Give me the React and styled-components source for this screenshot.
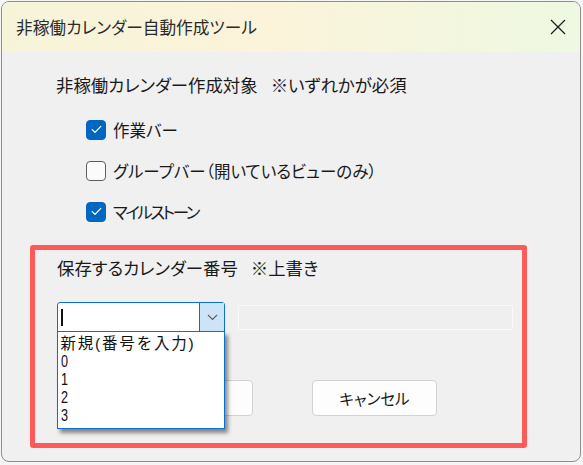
import React from 'react';
import styled, { createGlobalStyle } from 'styled-components';

const Global = createGlobalStyle`
  html, body { margin: 0; padding: 0; background: #f5f5f5; }
  body { font-family: "Noto Sans CJK JP", "Noto Sans", sans-serif; color: #1a1a1a; }
  * { box-sizing: border-box; }
`;

const Window = styled.div`
  margin: 1px 0 0 1px;
  width: 580px;
  height: 461px;
  border: 1px solid #8e8e8e;
  border-radius: 8px;
  background: #f0f0f0;
  overflow: hidden;
  display: flex;
  flex-direction: column;
`;

const TitleBar = styled.div`
  flex: none;
  height: 50px;
  display: flex;
  align-items: center;
  justify-content: space-between;
  padding: 0 13px 0 14px;
  background: linear-gradient(90deg, #f5f4d9 0%, #fbf3da 45%, #eef8e2 100%);
`;

const Title = styled.div`
  font-size: 16.7px;
  color: #2b2b2b;
  font-feature-settings: "palt";
`;

const CloseBtn = styled.div`
  width: 18px;
  height: 18px;
  display: flex;
  align-items: center;
  justify-content: center;
`;

const Body = styled.div`
  flex: 1;
  display: flex;
  flex-direction: column;
  padding: 21px 0 0 0;
`;

const Heading = styled.div`
  font-size: 17.4px;
  line-height: 24px;
  height: 24px;
  padding-left: ${p => p.$indent}px;
  font-feature-settings: "palt";
  white-space: nowrap;
`;

const Note = styled.span`
  margin-left: 13px;
`;

const CheckList = styled.div`
  margin-top: 12px;
  padding-left: 84px;
  display: flex;
  flex-direction: column;
`;

const CheckRow = styled.label`
  height: 41px;
  display: flex;
  align-items: center;
  gap: 7px;
  font-size: 16.5px;
  font-feature-settings: "palt";
  letter-spacing: ${p => p.$tracking || 0}px;
`;

const Box = styled.span`
  width: 20px;
  height: 20px;
  border-radius: 4px;
  display: flex;
  align-items: center;
  justify-content: center;
  background: ${p => (p.$checked ? '#0067c0' : '#fbfbfb')};
  border: 1px solid ${p => (p.$checked ? '#0067c0' : '#5e5e5e')};
`;

const Section = styled.div`
  margin: 13px 0 0 28px;
  width: 497px;
  height: 203px;
  border: 5px solid #fe5a5a;
  border-radius: 3px;
  padding: 6px 0 0 22px;
  display: flex;
  flex-direction: column;
`;

const FieldRow = styled.div`
  margin-top: 22px;
  display: flex;
  align-items: center;
  gap: 13px;
`;

const Combo = styled.div`
  position: relative;
  width: 168px;
  height: 30px;
  border: 1.5px solid #0a6fd0;
  border-radius: 3px 3px 0 0;
  background: #fff;
  display: flex;
`;

const ComboInput = styled.div`
  flex: 1;
  display: flex;
  align-items: center;
  padding-left: 3px;
`;

const Caret = styled.span`
  width: 1.5px;
  height: 17px;
  background: #111;
`;

const ComboButton = styled.div`
  width: 25px;
  background: #cce4f7;
  border-left: 1.5px solid #0a6fd0;
  display: flex;
  align-items: center;
  justify-content: center;
`;

const DropList = styled.div`
  position: absolute;
  left: -1.5px;
  top: 28px;
  width: 168px;
  height: 98px;
  background: #fff;
  border: 1.5px solid #0a6fd0;
  box-shadow: 3px 4px 4px rgba(0, 0, 0, 0.45);
  padding: 3px 0 0 3px;
  z-index: 2;
`;

const DropItem = styled.div`
  height: 18px;
  line-height: 18px;
  font-family: "Liberation Sans", "Noto Sans CJK JP", sans-serif;
  font-size: ${p => (p.$narrow ? 15.8 : 15.5)}px;
  color: #111;
  white-space: nowrap;
  letter-spacing: ${p => (p.$narrow ? 0 : 1.8)}px;
  transform: scaleX(${p => (p.$narrow ? 0.8 : 1)});
  transform-origin: left center;
`;

const Disabled = styled.div`
  width: 275px;
  height: 25px;
  border: 1.5px solid #f9f9f9;
  border-radius: 2px;
  background: #efefef;
`;

const ButtonRow = styled.div`
  margin-top: 48px;
  padding-left: 71px;
  display: flex;
  gap: 59px;
`;

const Button = styled.div`
  width: 125px;
  height: 36px;
  border: 1px solid #d2d2d2;
  border-radius: 4px;
  background: #fdfdfd;
  display: flex;
  align-items: center;
  justify-content: center;
  font-size: 15.5px;
  font-feature-settings: "palt";
  color: #1a1a1a;
`;

const Check = () => (
  <svg width="11" height="9" viewBox="0 0 11 9">
    <path d="M1.2 4.6 L4 7.4 L9.8 1.4" fill="none" stroke="#fff" strokeWidth="1.3" strokeLinecap="round" strokeLinejoin="round" />
  </svg>
);

const CheckItem = ({ checked, tracking, children }) => (
  <CheckRow $tracking={tracking}>
    <Box $checked={checked}>{checked && <Check />}</Box>
    <span>{children}</span>
  </CheckRow>
);

export default function App() {
  return (
    <>
      <Global />
      <Window>
        <TitleBar>
          <Title>非稼働カレンダー自動作成ツール</Title>
          <CloseBtn>
            <svg width="16" height="16" viewBox="0 0 16 16">
              <path d="M1 1 L15 15 M15 1 L1 15" stroke="#1a1a1a" strokeWidth="1.2" />
            </svg>
          </CloseBtn>
        </TitleBar>
        <Body>
          <Heading $indent={54}>
            非稼働カレンダー作成対象<Note>※いずれかが必須</Note>
          </Heading>
          <CheckList>
            <CheckItem checked>作業バー</CheckItem>
            <CheckItem>グループバー（開いているビューのみ）</CheckItem>
            <CheckItem checked tracking={-2.5}>マイルストーン</CheckItem>
          </CheckList>
          <Section>
            <Heading $indent={0}>
              保存するカレンダー番号<Note>※上書き</Note>
            </Heading>
            <FieldRow>
              <Combo>
                <ComboInput>
                  <Caret />
                </ComboInput>
                <ComboButton>
                  <svg width="11" height="7" viewBox="0 0 11 7">
                    <path d="M1 1 L5.5 5.5 L10 1" fill="none" stroke="#606060" strokeWidth="1.2" />
                  </svg>
                </ComboButton>
                <DropList>
                  <DropItem>新規(番号を入力)</DropItem>
                  <DropItem $narrow>0</DropItem>
                  <DropItem $narrow>1</DropItem>
                  <DropItem $narrow>2</DropItem>
                  <DropItem $narrow>3</DropItem>
                </DropList>
              </Combo>
              <Disabled />
            </FieldRow>
            <ButtonRow>
              <Button>OK</Button>
              <Button>キャンセル</Button>
            </ButtonRow>
          </Section>
        </Body>
      </Window>
    </>
  );
}
